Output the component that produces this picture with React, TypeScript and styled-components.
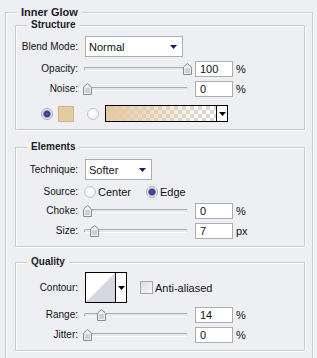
import React from 'react';
import styled, { createGlobalStyle } from 'styled-components';

const BG = '#eeeff3';

const GlobalStyle = createGlobalStyle`
  html, body { margin: 0; padding: 0; background: ${BG}; }
  body {
    font-family: "Liberation Sans", Arial, sans-serif;
    font-size: 10px;
    color: #111;
  }
  * { box-sizing: border-box; }
`;

const Page = styled.div`
  width: 317px;
  height: 358px;
  overflow: hidden;
  padding-top: 12px;
`;

const OuterGroup = styled.section`
  width: 308px;
  margin-left: 5px;
  border: 1px solid #c8cbd3;
  box-shadow: inset 1px 1px 0 #fff, 1px 1px 0 #fff;
  padding: 0 7px 24px 9px;
`;

const OuterTitle = styled.div`
  width: fit-content;
  margin: -7px 0 0 2px;
  padding: 0 4px;
  background: ${BG};
  font-size: 11px;
  line-height: 12px;
  font-weight: bold;
  color: #1c1c28;
`;

const Group = styled.section<{ $top: number }>`
  margin-top: ${p => p.$top}px;
  border: 1px solid #c8cbd3;
  box-shadow: inset 1px 1px 0 #fff, 1px 1px 0 #fff;
  padding: 0 8px 7px 4px;
`;

const GroupTitle = styled.div`
  width: fit-content;
  margin: -8px 0 0 7px;
  padding: 0 4px;
  background: ${BG};
  font-size: 10px;
  line-height: 14px;
  font-weight: bold;
  color: #1c1c28;
`;

const Rows = styled.div<{ $top: number }>`
  margin-top: ${p => p.$top}px;
  display: grid;
  grid-template-columns: 58px auto;
  column-gap: 7px;
  row-gap: 4px;
  align-items: center;
`;

const Label = styled.div`
  justify-self: end;
  white-space: nowrap;
  line-height: 12px;
`;

const Select = styled.div<{ $w: number }>`
  width: ${p => p.$w}px;
  height: 21px;
  background: #fff;
  border: 1px solid #a9aeb6;
  display: flex;
  align-items: center;
  justify-content: space-between;
  padding: 0 5px 0 3px;
  font-size: 11px;
`;

const Arrow = ({ color = '#1c1f5e' }: { color?: string }) => (
  <svg width="7" height="4" viewBox="0 0 7 4">
    <path d="M0 0H7L3.5 4Z" fill={color} />
  </svg>
);

const Control = styled.div`
  display: flex;
  align-items: center;
  gap: 3px;
`;

const SliderBox = styled.div`
  position: relative;
  width: 109px;
  height: 16px;
  margin-left: -2px;
`;

const Track = styled.div`
  position: absolute;
  left: 1px;
  top: 6px;
  width: 104px;
  height: 4px;
  border: 1px solid #a9acb4;
  border-bottom-color: #fdfdfd;
  border-right-color: #e4e5ea;
  border-radius: 2px;
  background: #e6e7eb;
`;

const Thumb = styled.div`
  position: absolute;
  top: 2px;
  width: 9px;
  height: 12px;
  display: flex;
`;

const NumberBox = styled.div`
  width: 38px;
  height: 16px;
  background: #fff;
  border: 1px solid #a9aeb6;
  padding-left: 4px;
  font-size: 11px;
  line-height: 14px;
`;

const Unit = styled.span`
  font-size: 11px;
`;

const Slider = ({ value, max = 100 }: { value: number; max?: number }) => (
  <SliderBox>
    <Track />
    <Thumb style={{ left: `${Math.round((value / max) * 100)}px` }}>
      <svg width="9" height="12" viewBox="0 0 9 12">
        <path d="M0.5 4 L4.5 0.5 L8.5 4 V11.5 H0.5 Z" fill="#eceef1" stroke="#868b95" />
        <rect x="2" y="5" width="5" height="5" fill="#cdd0d6" />
      </svg>
    </Thumb>
  </SliderBox>
);

const SliderRow = ({ label, value, max, unit }: { label: string; value: number; max?: number; unit: string }) => (
  <>
    <Label>{label}</Label>
    <Control>
      <Slider value={value} max={max} />
      <NumberBox>{value}</NumberBox>
      <Unit>{unit}</Unit>
    </Control>
  </>
);

const Radio = styled.span<{ $on?: boolean }>`
  display: inline-block;
  flex: none;
  width: 12px;
  height: 12px;
  border-radius: 50%;
  border: 1px solid ${p => (p.$on ? '#a4a8bb' : '#c3c6ce')};
  background: ${p =>
    p.$on
      ? 'radial-gradient(circle at 50% 50%, #6666b4 0, #30307c 2.4px, #7c7eb8 3.4px, #eef0f5 4.4px)'
      : 'radial-gradient(circle at 40% 40%, #ffffff 20%, #e4e5ea 100%)'};
`;

const ColorRow = styled.div`
  grid-column: 1 / -1;
  margin-top: 4px;
  padding-left: 21px;
  display: flex;
  align-items: center;
  gap: 13px;
  height: 17px;
`;

const ColorChoice = styled.div<{ $gap: number }>`
  display: flex;
  align-items: center;
  gap: ${p => p.$gap}px;
`;

const Swatch = styled.div`
  width: 16px;
  height: 16px;
  background: #e5cba2;
  border: 1px solid #cbb48e;
`;

const GradientBox = styled.div`
  width: 123px;
  height: 17px;
  border: 1px solid #000;
  display: flex;
`;

const GradientFill = styled.div`
  flex: 1;
  background:
    linear-gradient(to right, #e4c9a0 0%, rgba(228, 201, 160, 0.55) 45%, rgba(228, 201, 160, 0) 100%),
    conic-gradient(#d9d9d9 25%, #ffffff 0 50%, #d9d9d9 0 75%, #ffffff 0) 0 0 / 8px 8px;
`;

const DropButton = styled.div`
  width: 11px;
  border-left: 1px solid #000;
  background: #fff;
  display: flex;
  align-items: center;
  justify-content: center;
`;

const OptionRow = styled.div`
  display: flex;
  align-items: center;
  gap: 15px;
  height: 15px;
  margin-left: -1px;
`;

const Option = styled.label`
  display: flex;
  align-items: center;
  gap: 2px;
  font-size: 11px;
`;

const ContourRow = styled.div`
  display: flex;
  align-items: center;
  gap: 13px;
`;

const ContourBox = styled.div`
  width: 42px;
  height: 31px;
  border: 1px solid #000;
  display: flex;
  background: #fff;
`;

const ContourPreview = styled.div`
  flex: 1;
  display: flex;
`;

const CheckOption = styled.label`
  display: flex;
  align-items: center;
  gap: 2px;
  font-size: 11px;
`;

const Checkbox = styled.span`
  width: 13px;
  height: 13px;
  border: 1px solid #a3a7b0;
  background: linear-gradient(135deg, #dcdde3, #f8f8fa);
`;

export default function App() {
  return (
    <Page>
      <GlobalStyle />
      <OuterGroup>
        <OuterTitle>Inner Glow</OuterTitle>

        <Group $top={7}>
          <GroupTitle>Structure</GroupTitle>
          <Rows $top={4}>
            <Label>Blend Mode:</Label>
            <Select $w={98}>
              <span>Normal</span>
              <Arrow />
            </Select>
            <SliderRow label="Opacity:" value={100} unit="%" />
            <SliderRow label="Noise:" value={0} unit="%" />
            <ColorRow>
              <ColorChoice $gap={5}>
                <Radio $on />
                <Swatch />
              </ColorChoice>
              <ColorChoice $gap={6}>
                <Radio />
                <GradientBox>
                  <GradientFill />
                  <DropButton>
                    <Arrow color="#000" />
                  </DropButton>
                </GradientBox>
              </ColorChoice>
            </ColorRow>
          </Rows>
        </Group>

        <Group $top={17}>
          <GroupTitle>Elements</GroupTitle>
          <Rows $top={5}>
            <Label>Technique:</Label>
            <Select $w={67}>
              <span>Softer</span>
              <Arrow />
            </Select>
            <Label>Source:</Label>
            <OptionRow>
              <Option>
                <Radio />
                Center
              </Option>
              <Option>
                <Radio $on />
                Edge
              </Option>
            </OptionRow>
            <SliderRow label="Choke:" value={0} unit="%" />
            <SliderRow label="Size:" value={7} unit="px" />
          </Rows>
        </Group>

        <Group $top={15}>
          <GroupTitle>Quality</GroupTitle>
          <Rows $top={3}>
            <Label>Contour:</Label>
            <ContourRow>
              <ContourBox>
                <ContourPreview>
                  <svg width="29" height="29" viewBox="0 0 29 29">
                    <polygon points="0,29 29,0 29,29" fill="#d6d6e2" />
                  </svg>
                </ContourPreview>
                <DropButton>
                  <Arrow color="#000" />
                </DropButton>
              </ContourBox>
              <CheckOption>
                <Checkbox />
                Anti-aliased
              </CheckOption>
            </ContourRow>
            <SliderRow label="Range:" value={14} unit="%" />
            <SliderRow label="Jitter:" value={0} unit="%" />
          </Rows>
        </Group>
      </OuterGroup>
    </Page>
  );
}
